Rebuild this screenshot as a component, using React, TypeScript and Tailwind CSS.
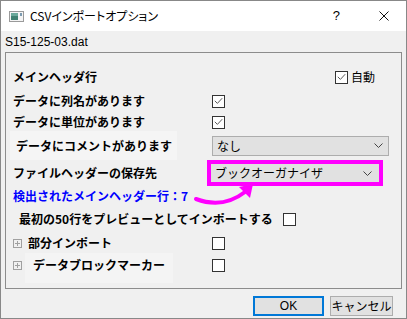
import React from 'react';

const jp = "font-['Noto_Sans_CJK_JP','Noto_Sans',sans-serif]";

const CheckBox: React.FC<{ checked?: boolean }> = ({ checked }) => (
  <span className="w-[13px] h-[13px] shrink-0 border border-[#333333] bg-white flex items-center justify-center">
    {checked && (
      <svg width="9" height="8" viewBox="0 0 9 8">
        <path d="M0.8 3.8 L3.4 6.4 L8.2 1.2" stroke="#5a5a5a" strokeWidth="1" fill="none" />
      </svg>
    )}
  </span>
);

const Chevron = () => (
  <svg width="9" height="5" viewBox="0 0 9 5">
    <path d="M0.5 0.5 L4.5 4.5 L8.5 0.5" stroke="#444" strokeWidth="1" fill="none" />
  </svg>
);

const Expander = () => (
  <svg width="9" height="9" viewBox="0 0 9 9" className="shrink-0">
    <rect x="0.5" y="0.5" width="8" height="8" fill="none" stroke="#a0a0a0" />
    <path d="M2 4.5 H7 M4.5 2 V7" stroke="#a0a0a0" strokeWidth="1" />
  </svg>
);

export default function App() {
  return (
    <div className={`relative w-[407px] h-[319px] border border-[#888888] bg-[#f0f0f0] flex flex-col ${jp}`}>
      {/* title bar */}
      <div className="h-[30px] bg-white flex items-center shrink-0">
        <svg width="15" height="11" viewBox="0 0 15 11" className="ml-[8px]">
          <rect x="0.5" y="0.5" width="14" height="10" fill="#f4f4f4" stroke="#9a9a9a" />
          <rect x="2" y="2" width="7" height="7" fill="#3f8070" />
          <rect x="2" y="2" width="7" height="3" fill="#6aa89a" />
          <rect x="11" y="2" width="2" height="3" fill="#7c9ab0" />
        </svg>
        <span className="ml-[6px] text-[12px] text-black [font-feature-settings:'palt']">CSVインポートオプション</span>
        <span className="ml-auto mr-[39px] text-[13px] text-black font-['Liberation_Sans',sans-serif]">?</span>
        <svg width="10" height="10" viewBox="0 0 10 10" className="mr-[17px]">
          <path d="M0.5 0.5 L9.5 9.5 M9.5 0.5 L0.5 9.5" stroke="#111" strokeWidth="1" />
        </svg>
      </div>

      {/* file name */}
      <div className="h-[21px] pl-[4px] flex items-center text-[12px] text-black font-['Liberation_Sans',sans-serif]">
        S15-125-03.dat
      </div>

      {/* group box */}
      <div className="mx-[4px] h-[237px] border border-[#8c8c8c] pt-[12px] flex flex-col text-[12px] text-black">
        <div className="h-[24px] pl-[7px] flex items-center">
          <span className="font-bold">メインヘッダ行</span>
          <span className="ml-auto mr-[26px] flex items-center">
            <CheckBox checked />
            <span className="ml-[3px] text-[12px]">自動</span>
          </span>
        </div>

        <div className="h-[24px] pl-[7px] flex items-center">
          <span className="w-[199px] font-bold">データに列名があります</span>
          <CheckBox checked />
        </div>

        <div className="h-[18px] pl-[7px] flex items-center">
          <span className="w-[199px] font-bold">データに単位があります</span>
          <CheckBox checked />
        </div>

        <div className="h-[29px] pl-[4px] flex items-center">
          <span className="w-[167px] h-full pl-[6px] flex items-center bg-[#f5f5f5] font-bold">データにコメントがあります</span>
          <div className="ml-[35px] w-[177px] h-[20px] border border-[#adadad] bg-[#e1e1e1] flex items-center pl-[4px] pr-[5px]">
            <span className="flex-1">なし</span>
            <Chevron />
          </div>
        </div>

        <div className="h-[26px] pl-[7px] flex items-center">
          <span className="w-[194px] font-bold">ファイルヘッダーの保存先</span>
          <div className="w-[176px] h-[26px] border-[4px] border-[#ff00ff] bg-[#e1e1e1] flex items-center pl-[4px] pr-[7px]">
            <span className="flex-1">ブックオーガナイザ</span>
            <Chevron />
          </div>
        </div>

        <div className="h-[19px] pl-[7px] flex items-center">
          <span className="font-bold text-[#0000ff]">検出されたメインヘッダー行：7</span>
        </div>

        <div className="h-[28px] pl-[13px] flex items-center">
          <span className="font-bold">最初の50行をプレビューとしてインポートする</span>
          <span className="ml-[10px]">
            <CheckBox />
          </span>
        </div>

        <div className="h-[20px] pl-[7px] flex items-center">
          <span className="w-[199px] flex items-center">
            <Expander />
            <span className="ml-[6px] font-bold">部分インポート</span>
          </span>
          <CheckBox />
        </div>

        <div className="h-[30px] pl-[7px] flex items-start">
          <span className="w-[199px] h-full flex items-start">
            <span className="h-[24px] flex items-center">
              <Expander />
            </span>
            <span className="ml-[3px] w-[148px] h-full bg-[#f4f4f4]">
              <span className="h-[24px] pl-[8px] flex items-center font-bold">データブロックマーカー</span>
            </span>
          </span>
          <span className="h-[24px] flex items-center">
            <CheckBox />
          </span>
        </div>
      </div>

      {/* buttons */}
      <div className="mt-[7px] pr-[13px] flex justify-end gap-[6px] text-[12px] text-black">
        <button className="w-[71px] h-[20px] border-2 border-[#0078d7] bg-[#e1e1e1] flex items-center justify-center font-['Liberation_Sans',sans-serif]">
          OK
        </button>
        <button className="w-[63px] h-[20px] border border-[#adadad] bg-[#e1e1e1] flex items-center justify-center">
          キャンセル
        </button>
      </div>

      {/* magenta arrow */}
      <svg className="absolute left-0 top-0 pointer-events-none" width="407" height="319" viewBox="0 0 407 319">
        <path d="M195 198 Q222 208 244 191" stroke="#ff00ff" strokeWidth="4" fill="none" strokeLinecap="round" />
        <path d="M252 183 L238 186 L249 197 Z" fill="#ff00ff" />
      </svg>
    </div>
  );
}
